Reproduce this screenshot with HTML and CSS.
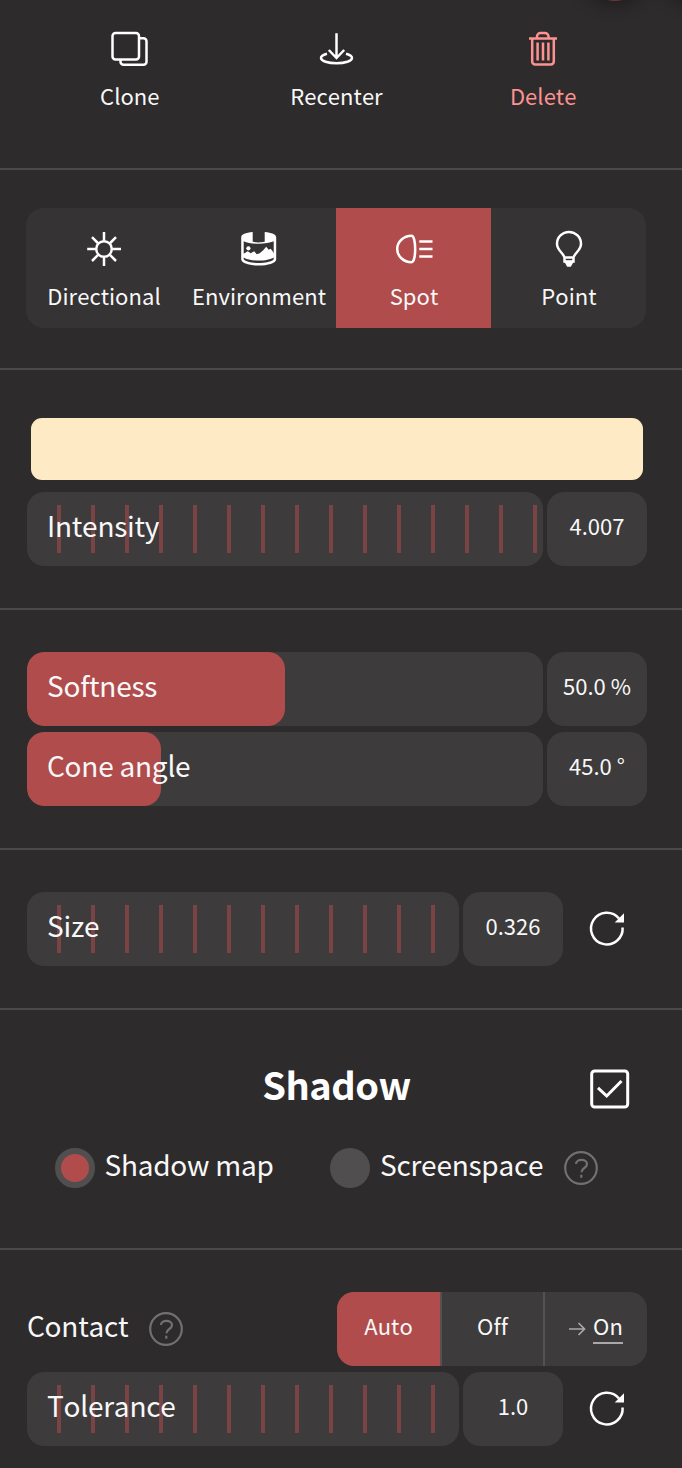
FILE: index.html
```html
<!DOCTYPE html>
<html lang="en">
<head>
<meta charset="utf-8">
<title>Light settings</title>
<link rel="stylesheet" href="styles.css">
</head>
<body>
<main class="panel">
  <div class="peek peek-a"></div>
  <div class="peek peek-b"></div>

  <section class="section actions">
    <button class="action">
      <svg class="icon" viewBox="0 0 40 40"><rect x="3.500" y="5" width="26.500" height="26.500" rx="3"/><path d="M30 10.300H34.500a3 3 0 0 1 3 3V33.700a3 3 0 0 1-3 3H14.500a3 3 0 0 1-3-3v-2.500"/></svg>
      <span>Clone</span>
    </button>
    <button class="action">
      <svg class="icon" viewBox="0 0 40 40"><path d="M20.500 5.300V30M12.800 22l7.700 8 7.700-8M11 25.800C7 26.800 5 28.300 5 30c0 3 6.900 5.200 15.500 5.200s15.500-2.200 15.500-5.200c0-1.700-2-3.200-6-4.200"/></svg>
      <span>Recenter</span>
    </button>
    <button class="action danger">
      <svg class="icon" viewBox="0 0 40 40"><path d="M6 10.500h28M9.200 10.500V33.500a3 3 0 0 0 3 3h15.600a3 3 0 0 0 3-3V10.500M14 10.500V8.500a3.500 3.500 0 0 1 3.500-3.500h4.500a3.500 3.500 0 0 1 3.500 3.500v2M14.600 14.500v18M20 14.500v18M25.400 14.500v18"/></svg>
      <span>Delete</span>
    </button>
  </section>

  <section class="section types-section">
    <div class="types">
      <button class="type">
        <svg class="icon" viewBox="0 0 40 40"><circle cx="20" cy="21" r="7.800"/><path d="M20 4v8.500M20 29.500v8.500M3.200 21h8.500M28.500 21h8.500M8 9.200l5.800 5.800M26.200 27.200l5.800 5.800M32 9.200l-5.800 5.800M13.800 27.200l-5.800 5.800"/></svg>
        <span>Directional</span>
      </button>
      <button class="type">
        <svg class="icon" viewBox="0 0 40 40"><g transform="translate(-.3 .3)"><path class="solid" d="M2.500 9C2.500 6 7 4.500 14 3.700V13.500C20 14.300 20 14.300 26 13.500V3.700C33 4.500 37.500 6 37.500 9V31C37.500 35 29 37.300 20 37.300S2.500 35 2.500 31ZM5 13V25C6.500 27 8.500 27.700 10 27.700L14 28C20 29.500 30 28.500 35 25V13C28 16.300 12 16.300 5 13ZM5 29.200V31C9 36 31 36 35 31V29.200C29 33.300 11 33.300 5 29.200Z" fill-rule="evenodd"/><path class="solid" d="M5 25.500l4-2.500 3 2 3.500-2 2.500 3 3-1 3.500-3 3-3.500 2.500 3 2-1 3 4v2.500C29 32 11 32 5 28Z"/><circle class="solid" cx="9.700" cy="20" r="2.100"/></g></svg>
        <span>Environment</span>
      </button>
      <button class="type selected">
        <svg class="icon" viewBox="0 0 40 40"><path d="M17.500 7.800C9.500 7.800 3.200 14 3.200 21S9.500 34.200 17.500 34.200C22.400 34.200 22.400 7.800 17.500 7.800ZM25.300 13.500H38.500M25.300 21H38.500M25.300 28.500H38.500"/></svg>
        <span>Spot</span>
      </button>
      <button class="type">
        <svg class="icon" viewBox="0 0 40 40"><path d="M15.500 29.500C13.800 24 8 22.500 8 15.800a12 11.800 0 0 1 24 0C32 22.500 26.200 24 24.500 29.500ZM15.500 29.500v4h9v-4"/><path class="solid" d="M14.800 32.800h10.400l-3.400 6h-3.600z"/></svg>
        <span>Point</span>
      </button>
    </div>
  </section>

  <section class="section intensity">
    <div class="swatch"></div>
    <div class="row">
      <div class="track"><div class="ticks"></div><span class="label">Intensity</span></div>
      <div class="value">4.007</div>
    </div>
  </section>

  <section class="section cone">
    <div class="row">
      <div class="track"><div class="fill" style="width:50%"></div><span class="label">Softness</span></div>
      <div class="value">50.0 %</div>
    </div>
    <div class="row">
      <div class="track"><div class="fill" style="width:26%"></div><span class="label">Cone angle</span></div>
      <div class="value">45.0 °</div>
    </div>
  </section>

  <section class="section size">
    <div class="row">
      <div class="track"><div class="ticks"></div><span class="label">Size</span></div>
      <div class="value">0.326</div>
      <button class="reset"><svg class="icon" viewBox="0 0 40 40"><path d="M35.600 18.500A15.800 15.800 0 1 1 32 9.500"/><path class="solid" d="M37 4.200v9.200H27.700z"/></svg></button>
    </div>
  </section>

  <section class="section shadow">
    <div class="heading">
      <h2>Shadow</h2>
      <svg class="checkbox" viewBox="0 0 40 40"><rect x="1.700" y="2" width="36" height="36" rx="3"/><path d="M8 18.800l8.700 8.200L31.500 12"/></svg>
    </div>
    <div class="modes">
      <div class="mode"><span class="radio on"></span><span class="label">Shadow map</span></div>
      <div class="mode"><span class="radio"></span><span class="label">Screenspace</span></div>
      <svg class="help" viewBox="0 0 34 34"><circle cx="17" cy="17" r="15.800"/><path d="M12 13c0-5.500 11-5.500 11 0 0 4.200-5.500 3.800-5.500 8.200M17.300 23.700v3"/></svg>
    </div>
  </section>

  <section class="section contact">
    <div class="row contact-row">
      <span class="label">Contact</span>
      <svg class="help" viewBox="0 0 34 34"><circle cx="17" cy="17" r="15.800"/><path d="M12 13c0-5.500 11-5.500 11 0 0 4.200-5.500 3.800-5.500 8.200M17.300 23.700v3"/></svg>
      <div class="choices">
        <button class="choice selected">Auto</button>
        <button class="choice">Off</button>
        <button class="choice"><svg class="arrow" viewBox="0 0 17 14"><path d="M0 7h16M9.500 1l6 6-6 6"/></svg><span class="linked">On</span></button>
      </div>
    </div>
    <div class="row">
      <div class="track"><div class="ticks"></div><span class="label">Tolerance</span></div>
      <div class="value">1.0</div>
      <button class="reset"><svg class="icon" viewBox="0 0 40 40"><path d="M35.600 18.500A15.800 15.800 0 1 1 32 9.500"/><path class="solid" d="M37 4.200v9.200H27.700z"/></svg></button>
    </div>
  </section>
</main>
</body>
</html>
```

FILE: styles.css
```css
* { box-sizing: border-box; }

body {
  margin: 0;
  background: #2e2b2c;
  color: #f8f8f8;
  font-family: "Noto Sans CJK SC", "Noto Sans", sans-serif;
  font-size: 22px;
  font-kerning: none;
  font-variant-ligatures: none;
  letter-spacing: 0.05px;
}

button {
  margin: 0;
  padding: 0;
  border: 0;
  background: none;
  color: inherit;
  font: inherit;
  font-kerning: none;
  letter-spacing: inherit;
}

.panel {
  position: relative;
  width: 682px;
  height: 1468px;
  overflow: hidden;
}

.peek {
  position: absolute;
  top: -59px;
  width: 60px;
  height: 60px;
  border-radius: 50%;
  background: #6c3536;
  box-shadow: 0 0 16px 6px rgba(0, 0, 0, 0.3);
}
.peek-a { left: 585px; }
.peek-b { left: 665px; }

.section { border-bottom: 2px solid #4b494a; }

.icon {
  display: block;
  width: 40px;
  height: 40px;
}
.icon, .checkbox, .help, .arrow {
  fill: none;
  stroke: #fff;
  stroke-width: 2.5;
}
.icon .solid { fill: #fff; stroke: none; }

.actions {
  display: flex;
  height: 170px;
  padding: 28px 36px 0 26px;
}
.action, .type {
  display: flex;
  flex: 1;
  flex-direction: column;
  align-items: center;
}
.action span, .type span {
  margin-top: 12px;
  padding-left: 1px;
  line-height: 30px;
  white-space: nowrap;
}
.danger { color: #fd9292; }
.danger .icon { stroke: #fd9292; }

.types-section { height: 200px; padding: 38px 36px 0 26px; }
.types {
  display: flex;
  height: 120px;
  overflow: hidden;
  border-radius: 18px;
  background: #353334;
}
.type { padding-top: 20px; }
.selected { background: #b04c4c; }

.intensity { height: 240px; padding: 48px 35px 0 27px; }
.swatch {
  height: 62px;
  margin: 0 4px 12px;
  border-radius: 11px;
  background: #feebc6;
}

.row { display: flex; gap: 4px; height: 74px; }
.track {
  display: grid;
  flex: 1;
  align-items: center;
  overflow: hidden;
  border-radius: 17px;
  background: #3d3b3c;
}
.track > * { grid-area: 1 / 1; }
.ticks {
  height: 48px;
  margin-left: 30px;
  background: repeating-linear-gradient(to right, #794443 0 4px, transparent 4px 34px);
}
.fill {
  height: 74px;
  border-radius: 17px;
  background: #b04c4c;
}
.label {
  font-size: 28px;
  letter-spacing: -0.24px;
  line-height: 40px;
  white-space: nowrap;
}
.track .label { padding-left: 20px; margin-bottom: 9px; }
.value {
  width: 100px;
  border-radius: 17px;
  background: #3d3b3c;
  line-height: 67px;
  text-align: center;
}
.reset { width: 80px; padding: 0 0 0 20px; }

.cone {
  display: flex;
  flex-direction: column;
  gap: 6px;
  height: 240px;
  padding: 42px 35px 0 27px;
}
.size { height: 160px; padding: 42px 35px 0 27px; }

.shadow { height: 240px; }
.heading {
  display: grid;
  grid-template-columns: 590px 40px;
  height: 138px;
  padding-top: 59px;
}
h2 {
  margin: -10px 0 0 83px;
  color: #fff;
  font-size: 38px;
  font-weight: 700;
  letter-spacing: -0.5px;
  line-height: 50px;
  text-align: center;
}
.checkbox { width: 40px; height: 40px; stroke-width: 3; }
.modes {
  display: grid;
  grid-template-columns: 275.5px 234px 34px;
  height: 40px;
  padding-left: 54.5px;
}
.mode { display: flex; }
.modes .label { margin: -4px 0 0 10px; }
.radio {
  width: 40px;
  height: 40px;
  border-radius: 50%;
  background: #504e4f;
}
.radio.on { border: 6px solid #504e4f; background: #b04c4c; }
.help { width: 34px; height: 34px; stroke: #727071; stroke-width: 2.2; }
.modes .help { margin-top: 3px; }

.contact {
  display: flex;
  flex-direction: column;
  gap: 6px;
  padding: 42px 35px 0 27px;
  border: 0;
}
.contact-row .label { width: 101px; margin-top: 13px; }
.contact-row .help { margin: 20px 0 0 16.5px; }
.choices {
  display: grid;
  grid-template-columns: 103px 103px 104px;
  width: 310px;
  margin-left: auto;
  overflow: hidden;
  border-radius: 17px;
  background: #3d3b3c;
}
.choice {
  display: flex;
  align-items: center;
  justify-content: center;
  padding-bottom: 8px;
}
.choice + .choice { border-left: 2px solid #535152; }
.arrow { width: 17px; height: 14px; margin: 7px 7px 0 0; stroke: #aaa8a9; stroke-width: 1.7; }
.linked {
  height: 32px;
  margin-top: 5px;
  border-bottom: 2px solid #aaa8a9;
  line-height: 26px;
}
```
